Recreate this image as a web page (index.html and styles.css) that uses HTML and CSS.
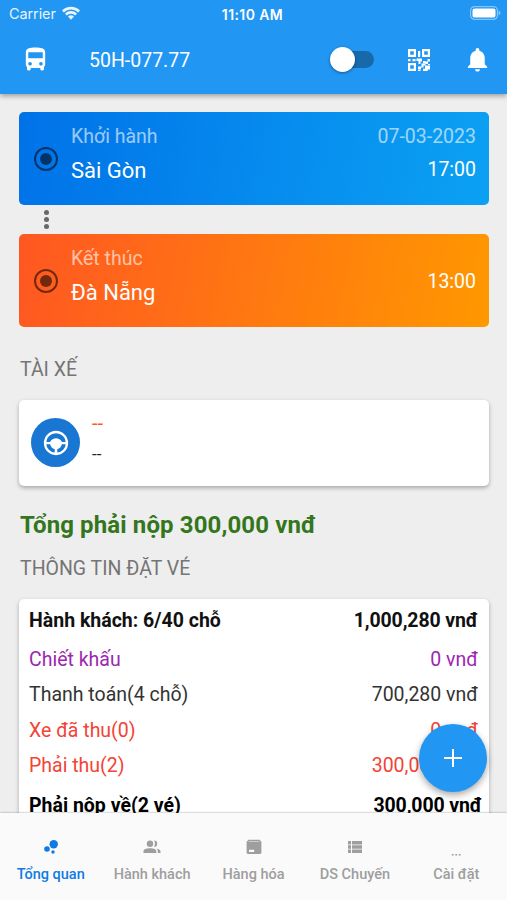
FILE: index.html
```html
<!DOCTYPE html>
<html lang="vi">
    <head>
        <title>50H-077.77</title>
        <meta charset="UTF-8">
        <link rel="stylesheet" href="styles.css">
    </head>
    <body>
        <div class="app">
            <header class="header">
                <div class="status">
                    <span class="carrier">Carrier
                        <svg class="wifi" viewBox="0 0 18 14"><path d="M0 4.400a12.800 12.800 0 0 1 18 0l-1.800 2a10.200 10.200 0 0 0-14.400 0z"/><path d="M3 7.500a8.600 8.600 0 0 1 12 0l-1.800 2a6 6 0 0 0-8.400 0z"/><path d="M6 10.600a4.300 4.300 0 0 1 6 0l-3 3.200z"/></svg>
                    </span>
                    <span class="clock">11:10 AM</span>
                    <svg class="battery" viewBox="0 0 31 14"><rect x="0.6" y="0.6" width="26.8" height="12.8" rx="4" fill="none" stroke="#fff" stroke-opacity="0.45" stroke-width="1.2"/><rect x="2.5" y="2.4" width="23" height="9.2" rx="2.2"/><path d="M28.6 4.6c2.4 .9 2.4 3.900 0 4.800z" opacity="0.5"/></svg>
                </div>
                <div class="toolbar">
                    <svg class="icon bus" viewBox="0 0 24 24"><path d="M4 16c0 .88.39 1.670 1 2.220V20c0 .55.45 1 1 1h1c.55 0 1-.45 1-1v-1h8v1c0 .55.45 1 1 1h1c.55 0 1-.45 1-1v-1.780c.61-.55 1-1.340 1-2.220V6c0-3.500-3.580-4-8-4s-8 .5-8 4v10zm3.500 1c-.83 0-1.500-.67-1.500-1.500S6.670 14 7.500 14s1.500.67 1.500 1.500S8.330 17 7.500 17zm9 0c-.83 0-1.500-.67-1.500-1.500s.67-1.500 1.500-1.500 1.500.67 1.500 1.500-.67 1.500-1.500 1.500zm1.500-6H6V6h12v5z"/></svg>
                    <h1 class="plate">50H-077.77</h1>
                    <div class="switch"><div class="knob"></div></div>
                    <svg class="icon qr" viewBox="0 0 24 24"><path fill-rule="evenodd" d="M1 1h8v8H1zM3.200 3.200v3.600h3.600V3.200zM15 1h8v8h-8zM17.200 3.200v3.600h3.600V3.200zM1 15h8v8H1zM3.200 17.200v3.600h3.600v-3.600zM11 3h2.200v6H11zM1 11h2.500v2.200H1zM5.500 11h3v2.200h-3zM9.500 10.500H15v3h-1.500V16h-2v-3h-2zM16 13h2.500v2.200H16zM20.500 11H23v2.500h-2.500zM18.500 13.500h2.500v2.500h-2.500zM21 16h2v2h-2zM14.500 15.500h4v2h-2v2h-2.500v2H11v-3h3.500zM11 21h2.500v2H11zM18 17.500h5v4h-2.200V23H16v-2.200h2z"/></svg>
                    <svg class="icon bell" viewBox="0 0 24 24"><path d="M12 22c1.100 0 2-.9 2-2h-4c0 1.100.89 2 2 2zm6-6v-5c0-3.070-1.640-5.640-4.500-6.320V4c0-.83-.67-1.500-1.500-1.500s-1.500.67-1.500 1.500v.68C7.630 5.360 6 7.920 6 11v5l-2 2v1h16v-1l-2-2z"/></svg>
                </div>
            </header>

            <main class="content">
                <div class="stop start">
                    <svg class="radio" viewBox="0 0 24 24"><circle cx="12" cy="12" r="11" fill="none" stroke="#000" stroke-width="2"/><circle cx="12" cy="12" r="6"/></svg>
                    <div class="place">
                        <div class="hint">Khởi hành</div>
                        <div class="name">Sài Gòn</div>
                    </div>
                    <div class="time">
                        <div class="hint">07-03-2023</div>
                        <div class="hour">17:00</div>
                    </div>
                </div>
                <div class="dots"><i></i><i></i><i></i></div>
                <div class="stop end">
                    <svg class="radio" viewBox="0 0 24 24"><circle cx="12" cy="12" r="11" fill="none" stroke="#000" stroke-width="2"/><circle cx="12" cy="12" r="6"/></svg>
                    <div class="place">
                        <div class="hint">Kết thúc</div>
                        <div class="name">Đà Nẵng</div>
                    </div>
                    <div class="time">
                        <div class="hour">13:00</div>
                    </div>
                </div>

                <h2 class="label driver_label">TÀI XẾ</h2>
                <div class="card driver">
                    <div class="avatar">
                        <svg viewBox="0 0 24 24"><circle cx="12" cy="12" r="11" fill="none" stroke="#fff" stroke-width="2.300"/><path d="M2 11h4C7.500 8.600 9.500 7.300 12 7.300S16.500 8.600 18 11h4v2.200h-4.200c-.6 2.600-2 4.200-4.500 4.800V22h-2.600v-4c-2.500-.6-3.900-2.200-4.500-4.800H2z"/></svg>
                    </div>
                    <div class="driver_info">
                        <div class="driver_name">--</div>
                        <div class="driver_phone">--</div>
                    </div>
                </div>

                <div class="total">Tổng phải nộp 300,000 vnđ</div>
                <h2 class="label ticket_label">THÔNG TIN ĐẶT VÉ</h2>
                <div class="card tickets">
                    <div class="row head"><span>Hành khách: 6/40 chỗ</span><span class="money">1,000,280 vnđ</span></div>
                    <div class="row purple"><span>Chiết khấu</span><span>0 vnđ</span></div>
                    <div class="row"><span>Thanh toán(4 chỗ)</span><span>700,280 vnđ</span></div>
                    <div class="row red"><span>Xe đã thu(0)</span><span>0 vnđ</span></div>
                    <div class="row red"><span>Phải thu(2)</span><span>300,000 vnđ</span></div>
                    <div class="row sum"><span>Phải nộp về(2 vé)</span><span class="money">300,000 vnđ</span></div>
                </div>
            </main>

            <button type="button" class="fab"><svg viewBox="0 0 18 18"><path d="M8 0h2v8h8v2h-8v8H8v-8H0V8h8z"/></svg></button>

            <nav class="nav">
                <a class="tab active">
                    <svg viewBox="0 0 16 16"><circle cx="10.700" cy="5.200" r="4.200"/><circle cx="4" cy="10" r="2.800"/><circle cx="10" cy="13" r="1.700"/></svg>
                    <span>Tổng quan</span>
                </a>
                <a class="tab">
                    <svg viewBox="0 0 16 16"><circle cx="6" cy="4.800" r="3.200"/><path d="M10 1.600a3.200 3.200 0 1 1 0 6.400c1.300-2 1.300-4.400 0-6.400zM-.5 14v-1.800C-.5 10 3 9.200 6 9.200s6.300.8 6.300 3V14zM12.300 9.400c2.200.4 4.200 1.200 4.200 2.800V14h-2.700v-1.800c0-1.200-.6-2.100-1.500-2.800z"/></svg>
                    <span>Hành khách</span>
                </a>
                <a class="tab">
                    <svg viewBox="0 0 16 16"><path fill-rule="evenodd" d="M2.500 .8h11L15.400 2.800v10.700a1.500 1.500 0 0 1-1.500 1.500H2.100a1.500 1.500 0 0 1-1.500-1.500V2.800zM3 2l-.6.600h11.200L13 2zM3 10.700V13h5.200v-2.300z"/></svg>
                    <span>Hàng hóa</span>
                </a>
                <a class="tab">
                    <svg viewBox="0 0 16 16"><path d="M1 2h3v3.400H1zM5 2h10v3.400H5zM1 6.300h3v3.400H1zM5 6.300h10v3.400H5zM1 10.600h3V14H1zM5 10.600h10V14H5z"/></svg>
                    <span>DS Chuyến</span>
                </a>
                <a class="tab">
                    <svg viewBox="0 0 16 16"><path d="M3.800 15h1.800v1.500H3.800zM7.300 15h1.800v1.500H7.300zM10.800 15h1.800v1.500h-1.800z"/></svg>
                    <span>Cài đặt</span>
                </a>
            </nav>
        </div>
    </body>
</html>
```
FILE: styles.css
```css
* {
    box-sizing: border-box;
}
body {
    margin: 0;
    font-family: Roboto, "Noto Sans", sans-serif;
    background-color: #eeeeee;
}
h1, h2 {
    margin: 0;
    font-weight: normal;
}
svg {
    display: block;
    fill: currentColor;
    overflow: visible;
}
.app {
    position: relative;
    display: flex;
    flex-direction: column;
    height: 900px;
    overflow: hidden;
}
.header {
    flex: none;
    height: 94px;
    color: #fff;
    background-color: #2196f3;
    box-shadow: 0 2px 5px rgba(0, 0, 0, 0.35);
}
.status {
    display: grid;
    grid-template-columns: 1fr auto 1fr;
    align-items: center;
    height: 27px;
    padding: 0 6px 0 9px;
    font-family: Inter, sans-serif;
    font-size: 14.5px;
}
.carrier {
    display: flex;
    align-items: center;
    gap: 6px;
    letter-spacing: -0.1px;
    opacity: 0.9;
}
.wifi {
    width: 18px;
    height: 14px;
    margin-top: -2px;
}
.clock {
    margin: 1px 3px 0 0;
    font-weight: 600;
    font-size: 14px;
    letter-spacing: 0.4px;
    transform: translateX(-1px);
}
.battery {
    justify-self: end;
    width: 31px;
    height: 14px;
    margin-top: -1px;
}
.toolbar {
    display: flex;
    align-items: center;
    height: 66px;
    padding: 0 15px 0 21px;
}
.icon {
    width: 29px;
    height: 29px;
}
.bus, .bell {
    margin-top: -1px;
}
.plate {
    margin-left: 39px;
    font-size: 19.5px;
}
.switch {
    width: 41px;
    height: 17px;
    margin: -1px 0 0 auto;
    border-radius: 9px;
    background-color: #1769aa;
}
.knob {
    width: 25px;
    height: 25px;
    margin: -4px 0 0 -3px;
    border-radius: 50%;
    background-color: #fff;
    box-shadow: 0 1px 3px rgba(0, 0, 0, 0.4);
}
.qr {
    width: 24px;
    height: 24px;
    margin: -1px 0 0 33px;
}
.bell {
    margin-left: 32px;
}
.content {
    flex: 1;
    min-height: 0;
    padding: 18px 18px 0 19px;
    overflow: hidden;
}
.stop {
    display: flex;
    align-items: center;
    height: 93px;
    padding: 0 13px 0 15px;
    border-radius: 5px;
    color: #fff;
}
.start {
    background: linear-gradient(100deg, #0072e8, #0ba1f3);
}
.end {
    background: linear-gradient(100deg, #ff5722, #ff9800);
}
.radio {
    width: 24px;
    height: 24px;
    color: #000;
    opacity: 0.55;
}
.place {
    flex: 1;
    margin-left: 13px;
}
.hint {
    font-size: 19.5px;
    line-height: 24px;
    opacity: 0.6;
}
.name {
    margin-top: 8px;
    font-size: 22px;
    line-height: 28px;
}
.place, .start .time {
    height: 68px;
}
.time {
    text-align: right;
}
.hour {
    margin-top: 2px;
    font-size: 19.5px;
    line-height: 24px;
}
.start .hour {
    margin-top: 9px;
}
.dots {
    display: flex;
    flex-direction: column;
    align-items: center;
    justify-content: center;
    gap: 2.4px;
    width: 54px;
    height: 29px;
}
.dots i {
    width: 5px;
    height: 5px;
    border-radius: 50%;
    background-color: #686868;
}
.label {
    padding-left: 1px;
    font-size: 19.5px;
    line-height: 24px;
    color: #757575;
}
.driver_label {
    margin-top: 31px;
}
.card {
    border-radius: 5px;
    background-color: #fff;
    box-shadow: 0 2px 4px rgba(0, 0, 0, 0.3);
}
.driver {
    display: flex;
    align-items: center;
    height: 86px;
    margin-top: 18px;
    padding: 0 12px 1px;
}
.avatar {
    display: flex;
    align-items: center;
    justify-content: center;
    width: 49px;
    height: 49px;
    border-radius: 50%;
    color: #fff;
    background-color: #1976d2;
}
.avatar svg {
    width: 24px;
    height: 24px;
}
.driver_info {
    margin: -11px 0 0 12px;
}
.driver_name {
    font-size: 20px;
    line-height: 34px;
    color: #ff5722;
}
.driver_phone {
    font-size: 17px;
    line-height: 28px;
    color: #222;
}
.total {
    margin: 25px 0 0 1px;
    font-size: 24px;
    line-height: 28px;
    font-weight: bold;
    letter-spacing: 0.12px;
    color: #33761c;
}
.ticket_label {
    margin-top: 18px;
}
.tickets {
    height: 260px;
    margin-top: 18px;
    padding: 4px 11px 0 10px;
}
.row {
    display: flex;
    justify-content: space-between;
    font-size: 19.5px;
    line-height: 35.4px;
    color: #333;
}
.head {
    margin-bottom: 3.5px;
    font-weight: bold;
    color: #111;
}
.money {
    letter-spacing: -0.12px;
}
.purple {
    color: #9c27b0;
}
.red {
    color: #f44336;
}
.sum {
    margin: 4px -4px 0 0;
    font-weight: bold;
    color: #000;
}
.fab {
    position: absolute;
    right: 20px;
    bottom: 108px;
    display: flex;
    align-items: center;
    justify-content: center;
    width: 68px;
    height: 68px;
    padding: 0;
    border: 0;
    border-radius: 50%;
    color: #fff;
    background-color: #2196f3;
    box-shadow: 0 3px 7px rgba(0, 0, 0, 0.35);
}
.fab svg {
    width: 18px;
    height: 18px;
}
.nav {
    position: relative;
    flex: none;
    display: flex;
    height: 87px;
    background-color: #fafafa;
    box-shadow: 0 0 2px rgba(0, 0, 0, 0.4);
}
.tab {
    flex: 1;
    display: flex;
    flex-direction: column;
    align-items: center;
    padding-top: 26px;
    font-size: 14.5px;
    line-height: 18px;
    font-weight: 500;
    color: #9e9e9e;
}
.tab svg {
    width: 16px;
    height: 16px;
    margin-bottom: 11px;
}
.active {
    color: #0f7ae5;
}
```
